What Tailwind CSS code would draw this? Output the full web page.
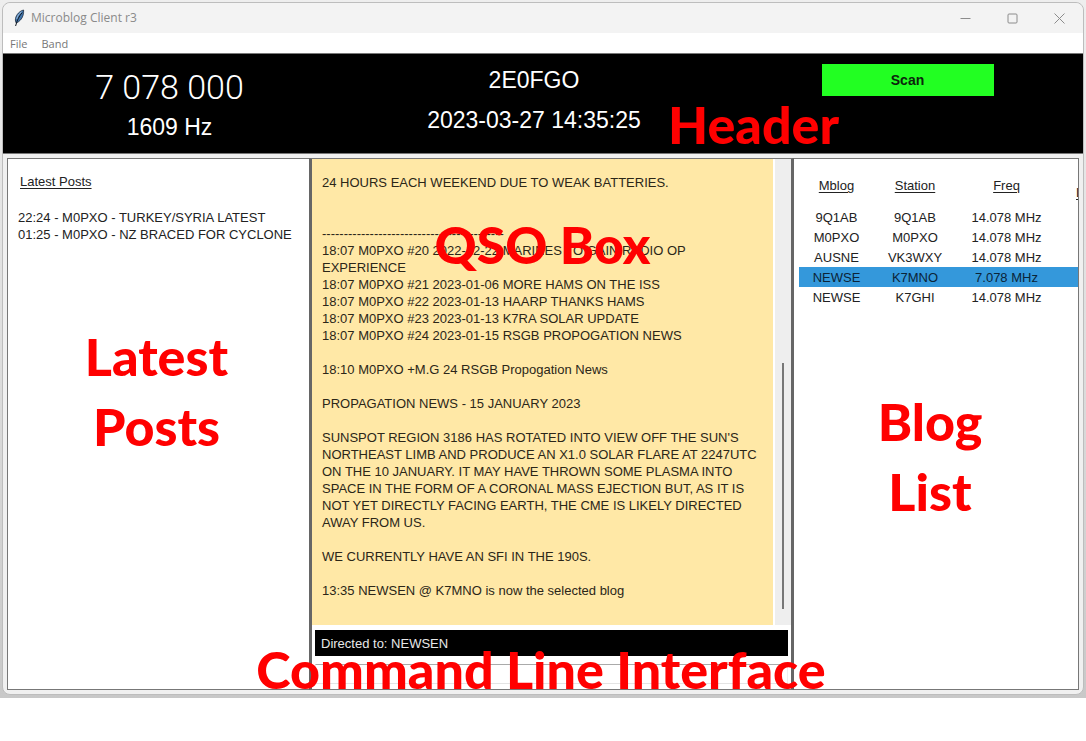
<!DOCTYPE html>
<html lang="en">
<head>
<meta charset="utf-8">
<title>Microblog Client r3</title>
<script src="https://cdn.jsdelivr.net/npm/@tailwindcss/browser@4"></script>
</head>
<body class="flex h-screen flex-col overflow-hidden bg-white pb-[43px] font-['Liberation_Sans',sans-serif] text-[13px] leading-[17px] text-[#222]">
<div class="flex min-h-0 flex-1 flex-col bg-linear-to-b from-[#eeeeee] via-[#dedede] to-[#c8c8c8] px-[2px] pt-[2px] pb-[3px]">
  <div class="relative flex min-h-0 flex-1 flex-col rounded-lg border border-[#bdbdbd] bg-[#f0f0f0]">

    <!-- Title bar -->
    <div class="flex h-[30px] shrink-0 items-center rounded-t-lg bg-[#f3f3f3] pl-[10px] font-['Open_Sans',sans-serif] text-xs text-[#8a8a8a]">
      <svg class="mr-[6px] h-[18px] w-3" viewBox="0 0 12 18" fill="none">
        <path d="M10.6 1C6.500 2 3.200 5.800 2.500 9.500C2.200 11.500 2.600 13 3.300 14C6.500 12.500 9 10 10 6.500C10.500 4.500 10.800 2.500 10.600 1Z" fill="#3f74ad" stroke="#1d2b3c" stroke-width=".8"/>
        <path d="M9.300 3.500C6.500 6.500 4 11 2.600 17" stroke="#101820" stroke-width="1"/>
        <path d="M8.600 2.800C6 4.600 4.300 7.200 3.800 9.800" stroke="#9fc0e0" stroke-width="1"/>
      </svg>
      <h1>Microblog Client r3</h1>
      <div class="ml-auto flex h-full">
        <button class="flex w-[47px] items-center justify-center" aria-label="Minimize"><svg class="size-[11px]" viewBox="0 0 11 11" stroke="#8c8c8c"><path d="M.5 5.500H10.500"/></svg></button>
        <button class="flex w-[47px] items-center justify-center" aria-label="Maximize"><svg class="size-[11px]" viewBox="0 0 11 11" fill="none" stroke="#8c8c8c"><rect x="1" y="1" width="9" height="9" rx="1"/></svg></button>
        <button class="flex w-[47px] items-center justify-center" aria-label="Close"><svg class="size-[11px]" viewBox="0 0 11 11" stroke="#8c8c8c"><path d="M.5 .5L10.500 10.500M10.500 .5L.5 10.500"/></svg></button>
      </div>
    </div>

    <!-- Menu -->
    <nav class="flex h-5 shrink-0 items-center gap-[14px] bg-white pl-[7px] font-['Open_Sans',sans-serif] text-[11px] font-medium text-[#777]">
      <button>File</button>
      <button>Band</button>
    </nav>

    <!-- Radio header -->
    <header class="relative grid h-[101px] shrink-0 grid-cols-[333fr_396fr_351fr] border-y border-[#777] bg-black text-center text-[23px] leading-10 text-white">
      <div class="pt-[13px]">
        <div class="font-['Roboto',sans-serif] text-[34px] font-light">7 078 000</div>
        <div>1609 Hz</div>
      </div>
      <div class="pt-[6px]">
        <div>2E0FGO</div>
        <div>2023-03-27 14:35:25</div>
      </div>
      <div class="pt-[10px]">
        <button class="mx-auto block h-8 w-[172px] bg-[#22ff22] text-sm font-bold text-[#0c260c]">Scan</button>
      </div>
      <div class="absolute top-[40px] left-[665px] font-['Lato',sans-serif] text-[52px] leading-[60px] font-black text-[#ff0000]">Header</div>
    </header>

    <!-- Panels -->
    <main class="flex min-h-0 flex-1 p-1">
      <section class="relative w-[302px] shrink-0 border border-r-0 border-[#777] bg-white">
        <h2 class="mt-[14px] ml-3 underline underline-offset-2">Latest Posts</h2>
        <ul class="mt-[19px] ml-[10px] whitespace-nowrap">
          <li>22:24 - M0PXO - TURKEY/SYRIA LATEST</li>
          <li>01:25 - M0PXO - NZ BRACED FOR CYCLONE</li>
        </ul>
        <div class="absolute inset-x-0 top-[162px] pr-1 text-center font-['Lato',sans-serif] text-[52px] leading-[70px] font-black text-[#ff0000]">Latest<br>Posts</div>
      </section>

      <section class="flex min-w-0 flex-1 flex-col border-x-3 border-y border-x-[#666] border-y-[#777] bg-white">
        <div class="relative flex min-h-0 flex-1">
          <div class="relative mr-[2px] min-w-0 flex-1 overflow-hidden bg-[#ffe8a6] pt-[15px] pl-[10px] whitespace-nowrap text-[#2b2618]">
            <p>24 HOURS EACH WEEKEND DUE TO WEAK BATTERIES.</p>
            <p class="mt-[34px]">------------------------------------------</p>
            <p>18:07 M0PXO #20 2022-12-22 MARINES TO GAIN RADIO OP<br>EXPERIENCE</p>
            <p>18:07 M0PXO #21 2023-01-06 MORE HAMS ON THE ISS</p>
            <p>18:07 M0PXO #22 2023-01-13 HAARP THANKS HAMS</p>
            <p>18:07 M0PXO #23 2023-01-13 K7RA SOLAR UPDATE</p>
            <p>18:07 M0PXO #24 2023-01-15 RSGB PROPOGATION NEWS</p>
            <p class="mt-[17px]">18:10 M0PXO +M.G 24 RSGB Propogation News</p>
            <p class="mt-[17px]">PROPAGATION NEWS - 15 JANUARY 2023</p>
            <p class="mt-[17px]">SUNSPOT REGION 3186 HAS ROTATED INTO VIEW OFF THE SUN'S<br>NORTHEAST LIMB AND PRODUCE AN X1.0 SOLAR FLARE AT 2247UTC<br>ON THE 10 JANUARY. IT MAY HAVE THROWN SOME PLASMA INTO<br>SPACE IN THE FORM OF A CORONAL MASS EJECTION BUT, AS IT IS<br>NOT YET DIRECTLY FACING EARTH, THE CME IS LIKELY DIRECTED<br>AWAY FROM US.</p>
            <p class="mt-[17px]">WE CURRENTLY HAVE AN SFI IN THE 190S.</p>
            <p class="mt-[17px]">13:35 NEWSEN @ K7MNO is now the selected blog</p>
            <div class="absolute inset-x-0 top-[55px] text-center font-['Lato',sans-serif] text-[52px] leading-[60px] font-black text-[#ff0000]">QSO Box</div>
          </div>
          <div class="flex w-4 shrink-0 flex-col items-center bg-[#eeeeee] pb-4">
            <div class="mt-auto h-[246px] w-[2px] bg-[#777]"></div>
          </div>
        </div>
        <label for="cmd" class="mx-[3px] mt-[5px] block h-[26px] shrink-0 bg-black pl-[6px] leading-[27px] text-[#e8e8e8]">Directed to: NEWSEN</label>
        <input id="cmd" type="text" class="mx-[3px] mt-2 mb-[5px] block h-5 shrink-0 border border-t-[#aaa] border-r-[#eee] border-b-[#e4e4e4] border-l-[#eee] bg-white px-1 outline-none">
      </section>

      <section class="relative w-[285px] shrink-0 overflow-hidden border border-l-0 border-[#777] bg-white pt-[16px] pl-[5px]">
        <table class="w-full table-fixed border-collapse text-center whitespace-nowrap">
          <colgroup><col class="w-[75px]"><col class="w-[82px]"><col class="w-[101px]"><col></colgroup>
          <thead>
            <tr class="h-8 align-top underline underline-offset-2">
              <th class="pt-[2px] font-normal">Mblog</th>
              <th class="pt-[2px] font-normal">Station</th>
              <th class="pt-[2px] font-normal">Freq</th>
              <th class="overflow-hidden pt-[9px] pl-[19px] text-left font-normal">L</th>
            </tr>
          </thead>
          <tbody>
            <tr class="h-5"><td>9Q1AB</td><td>9Q1AB</td><td>14.078 MHz</td><td></td></tr>
            <tr class="h-5"><td>M0PXO</td><td>M0PXO</td><td>14.078 MHz</td><td></td></tr>
            <tr class="h-5"><td>AUSNE</td><td>VK3WXY</td><td>14.078 MHz</td><td></td></tr>
            <tr class="h-5 bg-[#3498db] text-[#0b2438]"><td>NEWSE</td><td>K7MNO</td><td>7.078 MHz</td><td></td></tr>
            <tr class="h-5"><td>NEWSE</td><td>K7GHI</td><td>14.078 MHz</td><td></td></tr>
          </tbody>
        </table>
        <div class="absolute inset-x-0 top-[227px] pr-3 text-center font-['Lato',sans-serif] text-[52px] leading-[70px] font-black text-[#ff0000]">Blog<br>List</div>
      </section>
    </main>

    <div class="pointer-events-none absolute inset-x-0 bottom-[-5px] pr-1 text-center font-['Lato',sans-serif] text-[52px] leading-[60px] font-black text-[#ff0000]">Command Line Interface</div>
  </div>
</div>
</body>
</html>
